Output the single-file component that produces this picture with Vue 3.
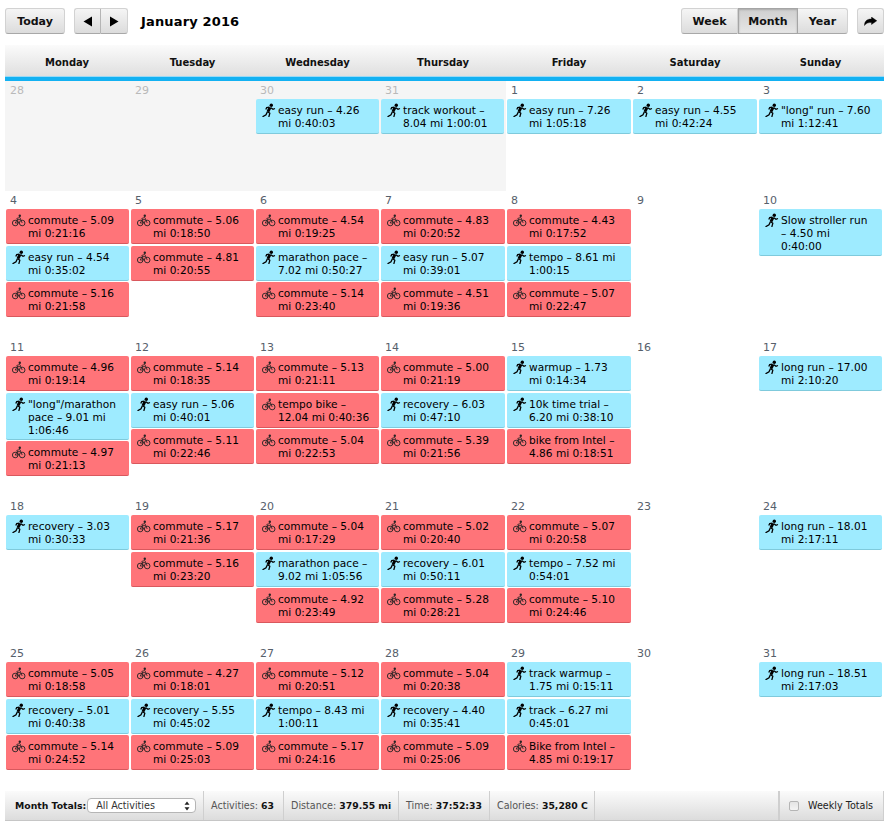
<script setup>
const parse = (s) =>
  s.split(';').map((e) => ({ type: e[0], lines: e.slice(2).split('|') }))

const c = (a, b) => `b:commute – ${a}|mi ${b}`
const days = ['Monday', 'Tuesday', 'Wednesday', 'Thursday', 'Friday', 'Saturday', 'Sunday']

const raw = [
  [
    ['28', '', 1],
    ['29', '', 1],
    ['30', 'r:easy run – 4.26|mi 0:40:03', 1],
    ['31', 'r:track workout –|8.04 mi 1:00:01', 1],
    ['1', 'r:easy run – 7.26|mi 1:05:18'],
    ['2', 'r:easy run – 4.55|mi 0:42:24'],
    ['3', 'r:"long" run – 7.60|mi 1:12:41'],
  ],
  [
    ['4', `${c('5.09', '0:21:16')};r:easy run – 4.54|mi 0:35:02;${c('5.16', '0:21:58')}`],
    ['5', `${c('5.06', '0:18:50')};${c('4.81', '0:20:55')}`],
    ['6', `${c('4.54', '0:19:25')};r:marathon pace –|7.02 mi 0:50:27;${c('5.14', '0:23:40')}`],
    ['7', `${c('4.83', '0:20:52')};r:easy run – 5.07|mi 0:39:01;${c('4.51', '0:19:36')}`],
    ['8', `${c('4.43', '0:17:52')};r:tempo – 8.61 mi|1:00:15;${c('5.07', '0:22:47')}`],
    ['9', ''],
    ['10', 'r:Slow stroller run|– 4.50 mi|0:40:00'],
  ],
  [
    ['11', `${c('4.96', '0:19:14')};r:"long"/marathon|pace – 9.01 mi|1:06:46;${c('4.97', '0:21:13')}`],
    ['12', `${c('5.14', '0:18:35')};r:easy run – 5.06|mi 0:40:01;${c('5.11', '0:22:46')}`],
    ['13', `${c('5.13', '0:21:11')};b:tempo bike –|12.04 mi 0:40:36;${c('5.04', '0:22:53')}`],
    ['14', `${c('5.00', '0:21:19')};r:recovery – 6.03|mi 0:47:10;${c('5.39', '0:21:56')}`],
    ['15', 'r:warmup – 1.73|mi 0:14:34;r:10k time trial –|6.20 mi 0:38:10;b:bike from Intel –|4.86 mi 0:18:51'],
    ['16', ''],
    ['17', 'r:long run – 17.00|mi 2:10:20'],
  ],
  [
    ['18', 'r:recovery – 3.03|mi 0:30:33'],
    ['19', `${c('5.17', '0:21:36')};${c('5.16', '0:23:20')}`],
    ['20', `${c('5.04', '0:17:29')};r:marathon pace –|9.02 mi 1:05:56;${c('4.92', '0:23:49')}`],
    ['21', `${c('5.02', '0:20:40')};r:recovery – 6.01|mi 0:50:11;${c('5.28', '0:28:21')}`],
    ['22', `${c('5.07', '0:20:58')};r:tempo – 7.52 mi|0:54:01;${c('5.10', '0:24:46')}`],
    ['23', ''],
    ['24', 'r:long run – 18.01|mi 2:17:11'],
  ],
  [
    ['25', `${c('5.05', '0:18:58')};r:recovery – 5.01|mi 0:40:38;${c('5.14', '0:24:52')}`],
    ['26', `${c('4.27', '0:18:01')};r:recovery – 5.55|mi 0:45:02;${c('5.09', '0:25:03')}`],
    ['27', `${c('5.12', '0:20:51')};r:tempo – 8.43 mi|1:00:11;${c('5.17', '0:24:16')}`],
    ['28', `${c('5.04', '0:20:38')};r:recovery – 4.40|mi 0:35:41;${c('5.09', '0:25:06')}`],
    ['29', 'r:track warmup –|1.75 mi 0:15:11;r:track – 6.27 mi|0:45:01;b:Bike from Intel –|4.85 mi 0:19:17'],
    ['30', ''],
    ['31', 'r:long run – 18.51|mi 2:17:03'],
  ],
]

const weeks = raw.map((w) =>
  w.map(([num, ev, other]) => ({ num, other: !!other, events: ev ? parse(ev) : [] }))
)
</script>

<template>
  <div class="page">
    <header class="toolbar">
      <button class="btn today">Today</button>
      <div class="group nav">
        <button class="btn arrow"><svg width="10" height="11" viewBox="0 0 10 11"><path d="M9 0.500V10.500L0.500 5.500Z" fill="#000" /></svg></button>
        <button class="btn arrow"><svg width="10" height="11" viewBox="0 0 10 11"><path d="M1 0.500V10.500L9.500 5.500Z" fill="#000" /></svg></button>
      </div>
      <h1 class="title">January 2016</h1>
      <div class="spacer"></div>
      <div class="group views">
        <button class="btn week">Week</button>
        <button class="btn month active">Month</button>
        <button class="btn year">Year</button>
      </div>
      <button class="btn share">
        <svg width="13" height="9" viewBox="0 0 13 9"><path d="M0.500 8.500C0.500 4.500 2.500 2 7.500 2V0L12.800 3.800L7.500 7.500V5.500C4.500 5.500 2 6 0.500 8.500Z" fill="#000" stroke="#000" stroke-width="0.400" /></svg>
      </button>
    </header>

    <div class="calendar">
      <div class="head">
        <div v-for="d in days" :key="d" class="head-cell">{{ d }}</div>
      </div>
      <div v-for="(week, i) in weeks" :key="i" class="week-row" :class="{ first: i === 0 }">
        <div v-for="cell in week" :key="cell.num + i" class="cell" :class="{ other: cell.other }">
          <div class="num">{{ cell.num }}</div>
          <div
            v-for="(ev, j) in cell.events"
            :key="j"
            class="event"
            :class="ev.type === 'b' ? 'bike' : 'run'"
          >
            <svg v-if="ev.type === 'r'" class="ico" width="15" height="15" viewBox="1 -1 15 15">
              <circle cx="10.300" cy="2.300" r="1.700" fill="#000" />
              <path d="M9 4.500L7 8.500" stroke="#000" stroke-width="2.800" fill="none" />
              <path d="M9.500 4.500L12 6.300L14 5.500M8.500 4.200L5.700 4.500L4.800 6.500M6.500 8.500L8.800 10.300L7.800 14M6.500 8.500L5 11.800L1.500 13.800" stroke="#000" stroke-width="1.300" fill="none" />
            </svg>
            <svg v-else class="ico" width="15" height="15" viewBox="0 0 15 15">
              <circle cx="3.200" cy="11" r="2.800" stroke="#222" stroke-width="0.900" fill="none" />
              <circle cx="10.200" cy="11" r="2.800" stroke="#222" stroke-width="0.900" fill="none" />
              <path d="M3.200 11L5.300 7.600H8.800L10.200 11M4.800 6.400L6.600 11H3.200M4.800 6.400L7.800 5.500L8.800 7.300" stroke="#222" stroke-width="0.800" fill="none" />
              <circle cx="7.800" cy="3.700" r="1.200" fill="#222" />
            </svg>
            <div class="label">
              <div v-for="(l, k) in ev.lines" :key="k">{{ l }}</div>
            </div>
          </div>
        </div>
      </div>
    </div>

    <footer class="totals">
      <div class="sec first-sec">
        <b class="mt">Month Totals:</b>
        <div class="select">
          <span>All Activities</span>
          <svg width="6" height="10" viewBox="0 0 6 10"><path d="M3 0.500L5.500 3.800H0.500ZM3 9.500L0.500 6.200H5.500Z" fill="#222" /></svg>
        </div>
      </div>
      <div class="sec s-act">Activities:&nbsp;<b>63</b></div>
      <div class="sec s-dist">Distance:&nbsp;<b>379.55 mi</b></div>
      <div class="sec s-time">Time:&nbsp;<b>37:52:33</b></div>
      <div class="sec s-cal">Calories:&nbsp;<b>35,280 C</b></div>
      <div class="sec grow"></div>
      <div class="sec weekly">
        <span class="check"></span>
        <span>Weekly Totals</span>
      </div>
    </footer>
  </div>
</template>

<style scoped>
.page {
  width: 893px;
  height: 830px;
  box-sizing: border-box;
  padding: 8px 9px 0 5px;
  font-family: "DejaVu Sans", sans-serif;
  font-size: 11px;
  color: #000;
  overflow: hidden;
  background: #fff;
}
.toolbar {
  display: flex;
  align-items: flex-start;
  height: 37px;
}
.btn {
  display: flex;
  align-items: center;
  justify-content: center;
  height: 26px;
  box-sizing: border-box;
  padding: 0;
  border: 1px solid #d2d2d2;
  border-bottom: 1px solid #a8a8a8;
  border-radius: 3px;
  background: linear-gradient(#f5f5f5, #dcdcdc);
  font-family: "DejaVu Sans", sans-serif;
  font-size: 11px;
  font-weight: 700;
  color: #111;
}
.today { width: 60px; }
.group { display: flex; }
.group .btn { border-radius: 0; }
.group .btn:first-child { border-radius: 3px 0 0 3px; }
.group .btn:last-child { border-radius: 0 3px 3px 0; border-left: 0; }
.nav { margin-left: 9px; }
.arrow { width: 27px; }
.nav .arrow:first-child { border-right: 1px solid #b5b5b5; }
.title {
  margin: 0 0 0 13px;
  font-size: 13px;
  line-height: 28px;
  font-weight: 700;
  letter-spacing: 0.150px;
  color: #000;
}
.spacer { flex: 1; }
.week { width: 57px; }
.month { width: 60px; border-left: 0; }
.year { width: 50px; }
.active {
  background: linear-gradient(#cfcfcf, #e6e6e6);
  border: 1px solid #a5a5a5;
  box-shadow: inset 0 1px 2px #aaa;
  border-radius: 0;
}
.share { width: 27px; margin-left: 9px; }

.calendar { width: 879px; }
.head {
  display: grid;
  grid-template-columns: 126px 125px 125px 126px 126px 126px 125px;
  height: 36px;
  box-sizing: border-box;
  background: linear-gradient(#fbfbfb, #dedede);
  border-bottom: 4px solid #13b1f2;
  box-shadow: inset 0 -1px 0 #9bd9f5;
}
.head-cell {
  padding-right: 2px;
  text-align: center;
  font-weight: 700;
  font-size: 10px;
  line-height: 35px;
  color: #111;
}
.week-row {
  display: grid;
  grid-template-columns: 126px 125px 125px 126px 126px 126px 125px;
}
.week-row.first { min-height: 110px; }
.cell { box-sizing: border-box; padding-bottom: 19.200px; }
.week-row.first .cell { padding-bottom: 0; }
.cell:first-child { padding-left: 1px; }
.other { background: #f5f5f5; }
.cell:nth-child(4).other { margin-right: 1px; }
.num {
  height: 17px;
  padding: 1px 0 0 4px;
  line-height: 18px;
  font-size: 11px;
  color: #56606b;
}
.other .num { color: #b9b9b9; }
.event {
  box-sizing: border-box;
  display: flex;
  margin: 0 2px 1.600px 0;
  padding: 5px 4px 2px 6px;
  line-height: 13px;
  min-height: 35px;
  border-radius: 2px;
  color: #000;
  font-size: 10.600px;
  white-space: nowrap;
}
.run {
  background: #9eebff;
  border-bottom: 1px solid #7fcadc;
}
.bike {
  background: #ff7479;
  border-bottom: 1px solid #d9585d;
}
.ico { flex: none; margin-right: 1px; margin-top: -2px; }
.label { min-width: 0; }

.totals {
  display: flex;
  height: 30px;
  width: 879px;
  background: linear-gradient(#fbfbfb, #dcdcdc);
  border-bottom: 1px solid #c6c6c6;
  box-sizing: border-box;
  font-size: 9.600px;
  color: #555;
}
.sec {
  display: flex;
  align-items: center;
  box-sizing: border-box;
  padding: 1px 0 0 7px;
  border-right: 1px solid #cfcfcf;
  white-space: nowrap;
}
.sec b { color: #111; font-weight: 700; font-size: 9.300px; }
.first-sec { width: 199px; padding-left: 10px; }
.mt { margin-right: 1px; }
.select {
  display: flex;
  align-items: center;
  justify-content: space-between;
  width: 109px;
  height: 15px;
  box-sizing: border-box;
  padding: 0 5px 0 8px;
  background: #fff;
  border: 1px solid #b5b5b5;
  border-radius: 4px;
  color: #333;
  font-size: 9.600px;
}
.s-act { width: 80px; }
.s-dist { width: 115px; }
.s-time { width: 91px; }
.s-cal { width: 105px; }
.grow { flex: 1; }
.weekly { width: 105px; border-left: 1px solid #cfcfcf; padding-left: 9px; color: #222; }
.check {
  box-sizing: border-box;
  width: 10px;
  height: 10px;
  margin-right: 9px;
  background: linear-gradient(#e4e4e4, #f4f4f4);
  border: 1px solid #b5b5b5;
  border-radius: 2px;
}
</style>
